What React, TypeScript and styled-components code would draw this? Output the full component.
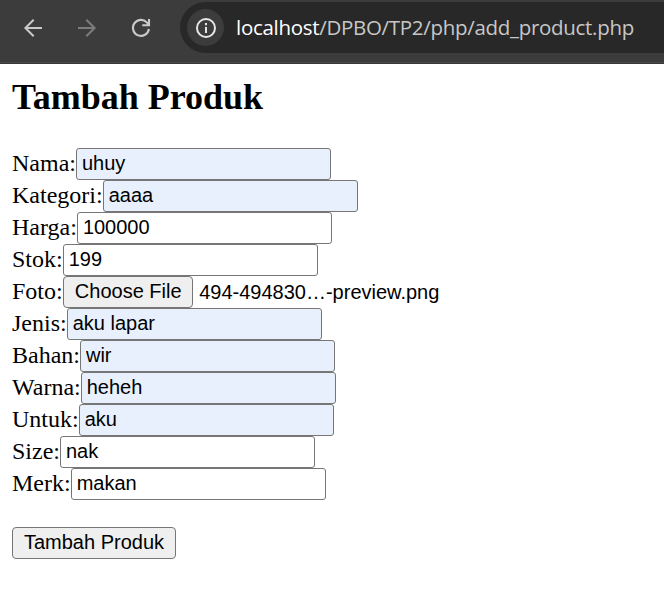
import React from "react";
import styled, { createGlobalStyle } from "styled-components";

const GlobalStyle = createGlobalStyle`
  *, *::before, *::after { box-sizing: border-box; }
  body {
    margin: 0;
    background: #fff;
    color: #000;
    font: 24px/27px "Liberation Serif", "Times New Roman", serif;
    overflow: hidden;
  }
`;

const Toolbar = styled.header`
  display: flex;
  align-items: flex-start;
  height: 64px;
  padding: 2px 0 0 20px;
  background: #3c3c3c;
  border-bottom: 1px solid #383838;
  box-shadow: inset 0 -1px 0 #484848;
`;

const NavButton = styled.span<{ $muted?: boolean }>`
  display: flex;
  flex: none;
  width: 54px;
  height: 52px;
  align-items: center;
  color: ${(p) => (p.$muted ? "#7d7d7d" : "#c9c9c9")};
`;

const AddressBar = styled.div`
  display: flex;
  flex: 1;
  align-items: center;
  height: 51px;
  margin-left: -2px;
  padding-left: 7px;
  border-radius: 26px 0 0 26px;
  background: #282828;
`;

const InfoBadge = styled.span`
  display: flex;
  flex: none;
  align-items: center;
  justify-content: center;
  width: 37px;
  height: 37px;
  border-radius: 50%;
  background: #3c3c3c;
  color: #e6e6e6;
`;

const Url = styled.span`
  margin-left: 12px;
  padding-bottom: 2px;
  color: #c7c7c7;
  font: 20.5px/28px "Open Sans", "Segoe UI", sans-serif;
  letter-spacing: -0.3px;
  white-space: nowrap;
`;

const Host = styled.span`
  color: #fff;
`;

const Page = styled.main`
  padding: 12px 12px 0;
`;

const Title = styled.h2`
  margin: 0 0 30px;
  font-size: 36px;
  font-weight: 700;
  line-height: 42px;
`;

const Row = styled.div`
  display: flex;
  height: 32px;
  align-items: flex-start;
  white-space: nowrap;
`;

const Label = styled.label`
  padding-top: 2px;
`;

const Field = styled.input<{ $filled?: boolean }>`
  width: 255px;
  height: 32px;
  margin: 0;
  padding: 0 5px 2px;
  border: 1px solid #767676;
  border-radius: 3px;
  outline: 0;
  background: ${(p) => (p.$filled ? "#e8f0fe" : "#fff")};
  color: #000;
  font: 20px/23px "Liberation Sans", Arial, sans-serif;
`;

const Button = styled.button<{ $width: number }>`
  width: ${(p) => p.$width}px;
  height: 32px;
  margin: 0;
  padding: 0 0 2px;
  border: 1px solid #767676;
  border-radius: 4px;
  background: #efefef;
  color: #000;
  font: 20px/23px "Liberation Sans", Arial, sans-serif;
  white-space: nowrap;
`;

const FileButton = styled(Button)`
  padding-left: 1px;
`;

const FileName = styled.span`
  margin-left: 6.5px;
  padding-top: 4px;
  font: 20px/25px "Liberation Sans", Arial, sans-serif;
`;

const Actions = styled.div`
  display: flex;
  margin-top: 27px;
`;

const BackIcon = () => (
  <svg width="26" height="26" viewBox="0 0 26 26" fill="none" stroke="currentColor" strokeWidth="2">
    <path d="M22 13H5.5M13.7 4.7 5.4 13l8.3 8.3" />
  </svg>
);

const ForwardIcon = () => (
  <svg width="26" height="26" viewBox="0 0 26 26" fill="none" stroke="currentColor" strokeWidth="2">
    <path d="M4 13h16.5M12.3 4.7l8.3 8.3-8.3 8.3" />
  </svg>
);

const ReloadIcon = () => (
  <svg width="26" height="26" viewBox="0 0 26 26" fill="none" stroke="currentColor" strokeWidth="2.1">
    <path d="M20.9 14a8 8 0 1 1-2.1-6.6L21 9.8M21 4v6.3h-6.7" />
  </svg>
);

const InfoIcon = () => (
  <svg width="22" height="22" viewBox="0 0 22 22" fill="none" stroke="currentColor" strokeWidth="2">
    <circle cx="11" cy="11" r="9" />
    <path d="M11 10v6M11 6v2.2" />
  </svg>
);

type Entry = { label: string; value: string; filled?: boolean; file?: boolean };

const entries: Entry[] = [
  { label: "Nama", value: "uhuy", filled: true },
  { label: "Kategori", value: "aaaa", filled: true },
  { label: "Harga", value: "100000" },
  { label: "Stok", value: "199" },
  { label: "Foto", value: "494-494830…-preview.png", file: true },
  { label: "Jenis", value: "aku lapar", filled: true },
  { label: "Bahan", value: "wir", filled: true },
  { label: "Warna", value: "heheh", filled: true },
  { label: "Untuk", value: "aku", filled: true },
  { label: "Size", value: "nak" },
  { label: "Merk", value: "makan" },
];

export default function App() {
  return (
    <>
      <GlobalStyle />
      <Toolbar>
        <NavButton><BackIcon /></NavButton>
        <NavButton $muted><ForwardIcon /></NavButton>
        <NavButton><ReloadIcon /></NavButton>
        <AddressBar>
          <InfoBadge><InfoIcon /></InfoBadge>
          <Url><Host>localhost</Host>/DPBO/TP2/php/add_product.php</Url>
        </AddressBar>
      </Toolbar>
      <Page>
        <Title>Tambah Produk</Title>
        <form onSubmit={(e) => e.preventDefault()}>
          {entries.map(({ label, value, filled, file }) => (
            <Row key={label}>
              <Label htmlFor={label}>{label}:</Label>
              {file ? (
                <>
                  <FileButton id={label} type="button" $width={130}>Choose File</FileButton>
                  <FileName>{value}</FileName>
                </>
              ) : (
                <Field id={label} defaultValue={value} $filled={filled} spellCheck={false} />
              )}
            </Row>
          ))}
          <Actions>
            <Button type="submit" $width={164}>Tambah Produk</Button>
          </Actions>
        </form>
      </Page>
    </>
  );
}
